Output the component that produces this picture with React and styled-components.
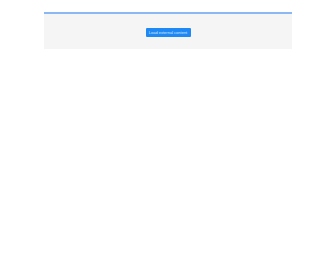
import React from 'react'
import styled, { createGlobalStyle } from 'styled-components'

const GlobalStyle = createGlobalStyle`
  html, body {
    margin: 0;
    padding: 0;
    background: #ffffff;
    font-family: "Liberation Sans", Arial, sans-serif;
  }
`

const Page = styled.div`
  width: 336px;
  height: 280px;
  padding: 12px 44px 0 44px;
  box-sizing: border-box;
`

const Panel = styled.section`
  display: flex;
  align-items: center;
  justify-content: center;
  height: 37px;
  box-sizing: border-box;
  padding-top: 1px;
  background: #f5f5f5;
  border-top: 2px solid #8db7f2;
`

const Button = styled.button`
  display: flex;
  align-items: center;
  justify-content: center;
  width: 45px;
  height: 9px;
  padding: 0;
  border: none;
  border-radius: 1px;
  background: #1e88f5;
  color: #d7e8ff;
  font-family: "Liberation Sans", Arial, sans-serif;
  font-size: 4px;
  white-space: nowrap;
  cursor: pointer;
`

export default function App() {
  return (
    <>
      <GlobalStyle />
      <Page>
        <Panel>
          <Button>Load external content</Button>
        </Panel>
      </Page>
    </>
  )
}
